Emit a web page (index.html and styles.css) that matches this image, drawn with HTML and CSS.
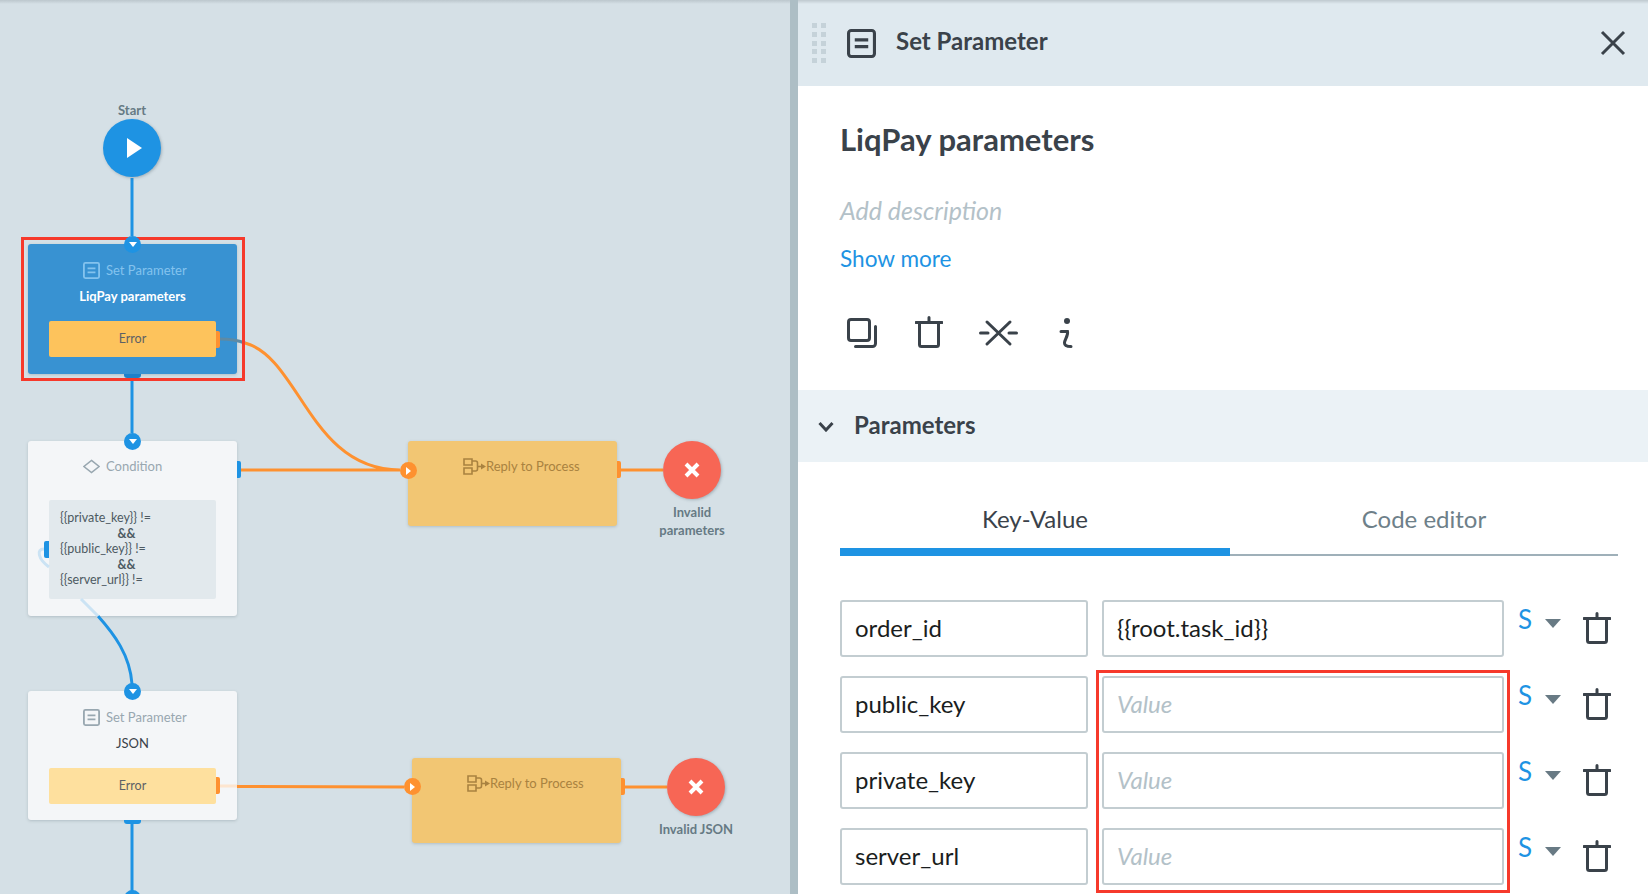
FILE: index.html
```html
<!DOCTYPE html>
<html lang="en">
<head>
  <meta charset="UTF-8">
  <title>Set Parameter</title>
  <link rel="stylesheet" href="styles.css">
</head>
<body>
<svg class="defs" width="0" height="0">
  <symbol id="i-param" viewBox="0 0 28 28">
    <rect x="1.5" y="1.5" width="25" height="25" rx="2.5" fill="none" stroke="currentColor" stroke-width="3"/>
    <path d="M7.5 10.5h13M7.5 17h13" fill="none" stroke="currentColor" stroke-width="3"/>
  </symbol>
  <symbol id="i-trash" viewBox="0 0 28 32">
    <path d="M1 6.5h26M14 1.5v5M4.5 7v21.5a2 2 0 0 0 2 2h15a2 2 0 0 0 2-2V7" fill="none" stroke="currentColor" stroke-width="3" stroke-linecap="round"/>
  </symbol>
  <symbol id="i-reply" viewBox="0 0 23 17">
    <path d="M1 1h8v6H1zM1 10h8v6H1zM9 3h3.5a2 2 0 0 1 2 2v6a2 2 0 0 1-2 2H9" fill="none" stroke="currentColor" stroke-width="1.6"/>
    <path d="M14 8.5h4" stroke="currentColor" stroke-width="1.6"/>
    <path d="M18 5.5l5 3-5 3z" fill="currentColor"/>
  </symbol>
  <symbol id="i-cross" viewBox="0 0 16 16">
    <path d="M2 2l12 12M14 2L2 14" fill="none" stroke="currentColor" stroke-width="4"/>
  </symbol>
</svg>

<div class="app">
  <div class="canvas">
    <svg class="wires" width="790" height="894">
      <path class="wire-blue" d="M132 178V236M132 374V433M132 824V894"/>
      <path class="wire-blue" d="M98 616C114 634 130 655 132 684"/>
      <path class="wire-faint" d="M44 549C36 549 38 559 49 567M81 599L98 616"/>
      <path class="wire-orange" d="M245 343C300 358 310 470 400 470M241 470H400M617 470H663"/>
      <path class="wire-shade" d="M220 339C228 339 237 340 245 343"/>
      <path class="wire-orange" d="M237 786.5L404 787M621 787H667"/>
      <path class="wire-pale" d="M220 786H237"/>
    </svg>

    <div class="cap cap-start">Start</div>
    <div class="round round-start"><span class="play"></span></div>

    <div class="node node-active node-a">
      <div class="node-head"><svg class="node-icon"><use href="#i-param"/></svg>Set Parameter</div>
      <div class="node-name">LiqPay parameters</div>
      <div class="node-btn btn-strong">Error</div>
    </div>
    <div class="pick"></div>
    <div class="port port-in port-blue port-a"><span></span></div>
    <div class="tab tab-bottom tab-a"></div>
    <div class="tab tab-right tab-orange tab-err-a"></div>

    <div class="node node-b">
      <div class="node-head head-cond">
        <svg class="node-icon" viewBox="0 0 18 15"><path d="M9 1l8 6.500-8 6.500-8-6.500z" fill="none" stroke="currentColor" stroke-width="1.600"/></svg>Condition
      </div>
      <div class="cond">
        <div>{{private_key}} !=</div>
        <div class="cond-and">&amp;&amp;</div>
        <div>{{public_key}} !=</div>
        <div class="cond-and">&amp;&amp;</div>
        <div>{{server_url}} !=</div>
      </div>
    </div>
    <div class="port port-in port-blue port-b"><span></span></div>
    <div class="tab tab-right tab-blue tab-cond-r"></div>
    <div class="tab tab-left tab-blue tab-cond-l"></div>

    <div class="node node-c">
      <div class="node-head"><svg class="node-icon"><use href="#i-param"/></svg>Set Parameter</div>
      <div class="node-name">JSON</div>
      <div class="node-btn">Error</div>
    </div>
    <div class="port port-in port-blue port-c"><span></span></div>
    <div class="tab tab-bottom tab-c"></div>
    <div class="tab tab-right tab-orange tab-err-c"></div>
    <div class="port port-blue port-d"></div>

    <div class="node node-reply node-r1">
      <div class="node-head head-reply"><svg class="reply-icon"><use href="#i-reply"/></svg>Reply to Process</div>
    </div>
    <div class="port port-orange port-r1"><span></span></div>
    <div class="tab tab-right tab-orange tab-r1"></div>
    <div class="round round-end end-1"><svg class="cross"><use href="#i-cross"/></svg></div>
    <div class="cap cap-end1">Invalid<br>parameters</div>

    <div class="node node-reply node-r2">
      <div class="node-head head-reply"><svg class="reply-icon"><use href="#i-reply"/></svg>Reply to Process</div>
    </div>
    <div class="port port-orange port-r2"><span></span></div>
    <div class="tab tab-right tab-orange tab-r2"></div>
    <div class="round round-end end-2"><svg class="cross"><use href="#i-cross"/></svg></div>
    <div class="cap cap-end2">Invalid JSON</div>
  </div>

  <div class="divider"></div>

  <div class="panel">
    <div class="panel-header">
      <div class="grip">
        <i></i><i></i><i></i><i></i><i></i><i></i><i></i><i></i><i></i><i></i>
      </div>
      <svg class="panel-icon"><use href="#i-param"/></svg>
      <div class="panel-title">Set Parameter</div>
      <svg class="close" viewBox="0 0 26 26"><path d="M2 2l22 22M24 2L2 24" fill="none" stroke="currentColor" stroke-width="3"/></svg>
    </div>

    <div class="intro">
      <h1>LiqPay parameters</h1>
      <div class="descr">Add description</div>
      <div class="more">Show more</div>
      <div class="actions">
        <svg class="act act-copy" viewBox="0 0 30 30">
          <rect x="1.500" y="1.500" width="21" height="21" rx="2.500" fill="none" stroke="currentColor" stroke-width="3"/>
          <path d="M28.500 8.500v17a3 3 0 0 1-3 3H8.500" fill="none" stroke="currentColor" stroke-width="3" stroke-linecap="round"/>
        </svg>
        <svg class="act act-trash"><use href="#i-trash"/></svg>
        <svg class="act act-cut" viewBox="0 0 39 28">
          <path d="M8 3l23 22M31 3L8 25M1.500 14H9M30 14h7.500" fill="none" stroke="currentColor" stroke-width="3" stroke-linecap="round"/>
        </svg>
        <svg class="act act-info" viewBox="0 0 15 30">
          <circle cx="8" cy="3" r="3" fill="currentColor"/>
          <path d="M2 13.500h6.500c1 4-3 8-3 11.500 0 2.500 2 3.500 6.500 3.500" fill="none" stroke="currentColor" stroke-width="3" stroke-linecap="round"/>
        </svg>
      </div>
    </div>

    <div class="section">
      <svg class="chevron" viewBox="0 0 16 11"><path d="M1.500 2l6.500 7 6.500-7" fill="none" stroke="currentColor" stroke-width="3"/></svg>
      <span>Parameters</span>
    </div>

    <div class="section-body">
      <div class="tabs">
        <div class="tab-item tab-on">Key-Value</div>
        <div class="tab-item">Code editor</div>
      </div>

      <div class="rows">
        <div class="pick pick-values"></div>

        <div class="kv">
          <div class="field">order_id</div>
          <div class="field">{{root.task_id}}</div>
          <div class="type">S</div>
          <div class="caret"></div>
          <svg class="kv-trash"><use href="#i-trash"/></svg>
        </div>
        <div class="kv">
          <div class="field">public_key</div>
          <div class="field field-empty">Value</div>
          <div class="type">S</div>
          <div class="caret"></div>
          <svg class="kv-trash"><use href="#i-trash"/></svg>
        </div>
        <div class="kv">
          <div class="field">private_key</div>
          <div class="field field-empty">Value</div>
          <div class="type">S</div>
          <div class="caret"></div>
          <svg class="kv-trash"><use href="#i-trash"/></svg>
        </div>
        <div class="kv">
          <div class="field">server_url</div>
          <div class="field field-empty">Value</div>
          <div class="type">S</div>
          <div class="caret"></div>
          <svg class="kv-trash"><use href="#i-trash"/></svg>
        </div>
      </div>
    </div>
  </div>
</div>
</body>
</html>
```

FILE: styles.css
```css
* {
  box-sizing: border-box;
}
html, body {
  margin: 0;
  height: 100%;
  overflow: hidden;
}
body {
  font-family: "Lato", "Liberation Sans", sans-serif;
  color: #3a424a;
  background: #d5e0e6;
}
.defs {
  position: absolute;
}
.app {
  display: flex;
  height: 894px;
  overflow: hidden;
}

/* diagram */
.canvas {
  position: relative;
  width: 790px;
  flex: none;
  background: linear-gradient(#bcc7cd, #d5e0e6 4px);
}
.wires {
  position: absolute;
  left: 0;
  top: 0;
  z-index: 1;
  fill: none;
}
.wire-blue, .wire-faint, .wire-orange, .wire-shade, .wire-pale {
  fill: none;
  stroke-width: 3;
}
.wire-blue { stroke: #1e93e3; }
.wire-faint { stroke: #cbe3f4; }
.wire-orange { stroke: #fe9130; }
.wire-shade { stroke: #5d8aa5; }
.wire-pale { stroke: #fde5cf; }

.node {
  position: absolute;
  left: 28px;
  width: 209px;
  background: #f4f6f8;
  border-radius: 3px;
  box-shadow: 0 1px 3px rgba(70,90,100,0.25);
  padding-top: 16px;
  font-size: 13px;
}
.node-a { top: 244px; height: 130px; background: #3892d2; }
.node-b { top: 441px; height: 175px; }
.node-c { top: 691px; height: 129px; }
.node-r1 { left: 408px; top: 441px; height: 85px; }
.node-r2 { left: 412px; top: 758px; height: 85px; }
.node-reply { background: #f2c673; }

.node-head {
  display: flex;
  align-items: center;
  justify-content: flex-start;
  padding-left: 55px;
  height: 20px;
  color: #98a7b0;
  white-space: nowrap;
}
.node-active .node-head { color: #84c3ee; }
.node-icon {
  width: 17px;
  height: 17px;
  margin-right: 6px;
  flex: none;
}
.head-cond {
  margin-top: -1px;
  margin-bottom: 24px;
}
.head-reply {
  padding-left: 55px;
  color: #a98240;
  margin-top: -1px;
}
.reply-icon {
  width: 23px;
  height: 17px;
  flex: none;
}
.node-name {
  margin-top: 6px;
  height: 20px;
  line-height: 20px;
  text-align: center;
  color: #3a424a;
}
.node-active .node-name {
  color: #fff;
  font-weight: 700;
}
.node-btn {
  margin: 15px 21px 0;
  height: 36px;
  line-height: 36px;
  text-align: center;
  font-size: 12.5px;
  color: #5d6165;
  background: #fee09e;
  border-radius: 2px;
}
.btn-strong { background: #fdc35c; }
.cond {
  margin: 0 21px;
  height: 99px;
  padding: 10px 11px;
  font-size: 12.5px;
  line-height: 15.5px;
  color: #4d5a62;
  background: #e2e9ed;
  border-radius: 2px;
  white-space: nowrap;
}
.cond-and {
  padding-right: 12px;
  text-align: center;
  font-weight: 700;
}

.pick {
  position: absolute;
  left: 21px;
  top: 237px;
  width: 224px;
  height: 144px;
  border: 3px solid #f6392b;
  z-index: 2;
}

/* ports */
.port {
  position: absolute;
  width: 17px;
  height: 17px;
  border-radius: 50%;
  z-index: 3;
  display: flex;
  align-items: center;
  justify-content: center;
}
.port-blue { background: #1e93e3; }
.port-orange { background: #fe9130; }
.port-in span {
  border-left: 4px solid transparent;
  border-right: 4px solid transparent;
  border-top: 5px solid #fff;
}
.port-orange span {
  border-top: 4px solid transparent;
  border-bottom: 4px solid transparent;
  border-left: 5px solid #fff;
}
.port-a { left: 124px; top: 236px; }
.port-b { left: 124px; top: 433px; }
.port-c { left: 124px; top: 683px; }
.port-d { left: 124px; top: 890px; }
.port-r1 { left: 400px; top: 462px; }
.port-r2 { left: 404px; top: 778px; }

.tab {
  position: absolute;
  z-index: 3;
}
.tab-bottom {
  left: 124px;
  width: 17px;
  height: 4px;
  background: #1e80c9;
  border-radius: 0 0 3px 3px;
}
.tab-right {
  width: 4px;
  height: 17px;
  border-radius: 0 2px 2px 0;
}
.tab-left {
  width: 5px;
  height: 17px;
  border-radius: 2px 0 0 2px;
}
.tab-blue { background: #1e93e3; }
.tab-orange { background: #fe9130; }
.tab-a { top: 374px; }
.tab-c { top: 820px; background: #1e93e3; }
.tab-err-a { left: 216px; top: 331px; }
.tab-err-c { left: 216px; top: 777px; }
.tab-cond-r { left: 237px; top: 461px; }
.tab-cond-l { left: 44px; top: 541px; }
.tab-r1 { left: 617px; top: 461px; }
.tab-r2 { left: 621px; top: 778px; }

.round {
  position: absolute;
  width: 58px;
  height: 58px;
  border-radius: 50%;
  box-shadow: 1px 1px 3px rgba(70,90,100,0.35);
  z-index: 2;
  display: flex;
  align-items: center;
  justify-content: center;
  color: #fff;
}
.round-start { left: 103px; top: 119px; background: #1e93e3; }
.round-end { background: #f76655; }
.end-1 { left: 663px; top: 441px; }
.end-2 { left: 667px; top: 758px; }
.cross {
  width: 16px;
  height: 16px;
}
.play {
  margin-left: 5px;
  border-top: 10.5px solid transparent;
  border-bottom: 10.5px solid transparent;
  border-left: 15px solid #fff;
}
.cap {
  position: absolute;
  width: 120px;
  text-align: center;
  font-size: 13px;
  line-height: 18px;
  font-weight: 700;
  color: #667a84;
}
.cap-start { left: 72px; top: 101px; }
.cap-end1 { left: 632px; top: 503px; }
.cap-end2 { left: 636px; top: 820px; }

.divider {
  width: 8px;
  flex: none;
  background: #adbec5;
}

/* right panel */
.panel {
  flex: 1;
  background: #fff;
  min-width: 0;
}
.panel-header {
  display: flex;
  align-items: center;
  height: 86px;
  padding: 0 22px 0 14px;
  background: linear-gradient(#bfc9cf, #dfe9ef 4px);
}
.grip {
  display: grid;
  grid-template-columns: 5px 5px;
  grid-auto-rows: 5px;
  gap: 3.6px 4px;
  margin-right: 21px;
}
.grip i {
  background: #c5d2d9;
}
.panel-icon {
  width: 29px;
  height: 29px;
  flex: none;
  margin-right: 20px;
}
.panel-title {
  flex: 1;
  padding-bottom: 5px;
  font-size: 24px;
  font-weight: 700;
}
.close {
  width: 26px;
  height: 26px;
}
.intro {
  height: 304px;
  padding: 32px 0 0 42px;
}
.intro h1 {
  margin: 0;
  font-size: 31px;
  line-height: 42px;
  font-weight: 700;
}
.descr {
  margin-top: 33px;
  font-size: 25px;
  line-height: 34px;
  font-style: italic;
  color: #b3c1c8;
}
.more {
  margin-top: 16px;
  font-size: 22.6px;
  line-height: 32px;
  color: #1e93e3;
}
.actions {
  display: flex;
  align-items: flex-end;
  margin: 41px 0 0 7px;
}
.act {
  flex: none;
}
.act-copy { width: 30px; height: 30px; margin-right: 38px; }
.act-trash { width: 28px; height: 32px; margin-right: 36px; }
.act-cut { width: 39px; height: 28px; margin-right: 41px; margin-bottom: 1px; }
.act-info { width: 15px; height: 30px; }

.section {
  display: flex;
  align-items: center;
  height: 72px;
  padding-left: 20px;
  background: #ebf2f6;
  font-size: 24px;
  font-weight: 700;
}
.section span {
  padding-bottom: 4px;
}
.chevron {
  width: 16px;
  height: 11px;
  margin-right: 20px;
}
.section-body {
  padding: 0 30px 0 42px;
}
.tabs {
  display: flex;
  height: 94px;
  border-bottom: 2px solid #9fb0b9;
}
.tab-item {
  flex: 1;
  padding-top: 41px;
  text-align: center;
  font-size: 24px;
  line-height: 32px;
  color: #6e8089;
}
.tab-on {
  flex: none;
  width: 390px;
  color: #3a424a;
  border-bottom: 8px solid #1e93e3;
  height: 94px;
}
.rows {
  position: relative;
  display: flex;
  flex-direction: column;
  gap: 19px;
  margin-top: 44px;
}
.pick-values {
  left: 256px;
  top: 70px;
  width: 414px;
  height: 223px;
}
.kv {
  display: flex;
  align-items: flex-start;
  height: 57px;
}
.field {
  flex: none;
  width: 248px;
  height: 57px;
  margin-right: 14px;
  padding-left: 13px;
  border: 2px solid #c3cdd1;
  border-radius: 3px;
  font-size: 24px;
  line-height: 51px;
  color: #1a1d20;
  white-space: nowrap;
}
.field + .field {
  width: 402px;
  margin-right: 13px;
}
.field-empty {
  color: #b3c1c8;
  font-style: italic;
}
.type {
  margin: 3px 0 0 1px;
  width: 27px;
  font-size: 26px;
  line-height: 32px;
  color: #1e93e3;
}
.caret {
  margin: 19px 22px 0 0;
  border-left: 8px solid transparent;
  border-right: 8px solid transparent;
  border-top: 9px solid #687a84;
}
.kv-trash {
  width: 28px;
  height: 32px;
  margin-top: 12px;
  flex: none;
}
```
